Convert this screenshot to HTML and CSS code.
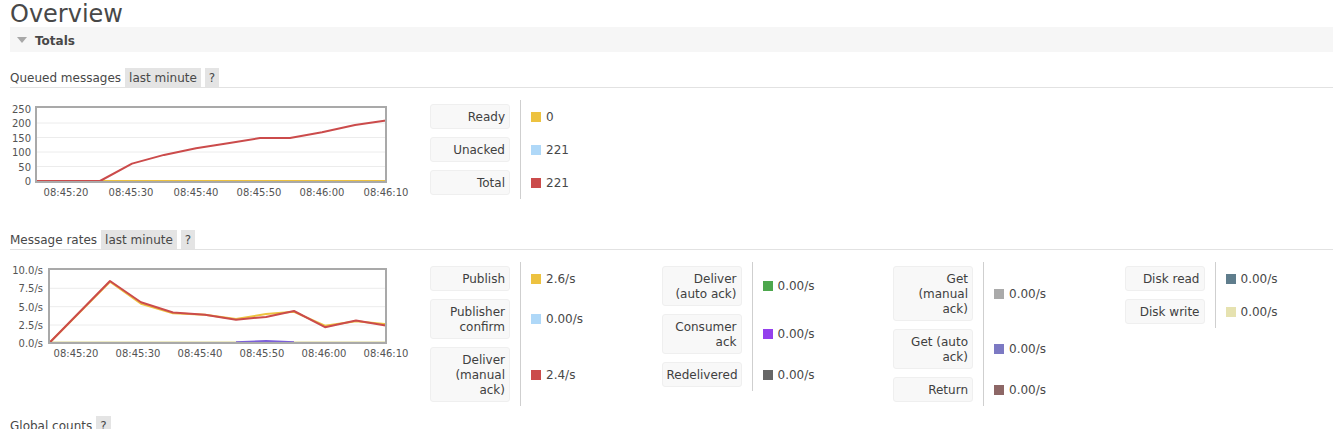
FILE: index.html
```html
<!DOCTYPE html>
<html>
<head>
<meta charset="utf-8">
<title>Overview</title>
<link rel="stylesheet" href="styles.css">
</head>
<body>
<h1 class="title">Overview</h1>
<div class="section-head"><span class="tri"></span><span class="section-name">Totals</span></div>

<h3 class="sub"><span class="sub-text">Queued messages</span><span class="pill pill-first">last minute</span><span class="pill">?</span></h3>
<div class="chart-row">
  <svg class="chart" width="410" height="120" viewBox="0 0 410 120">
    <g class="grid">
      <line x1="27" y1="66.5" x2="375" y2="66.5"/>
      <line x1="27" y1="52" x2="375" y2="52"/>
      <line x1="27" y1="37.5" x2="375" y2="37.5"/>
      <line x1="27" y1="23" x2="375" y2="23"/>
    </g>
    <g class="ylab">
      <text x="21" y="12.5">250</text>
      <text x="21" y="27">200</text>
      <text x="21" y="41.5">150</text>
      <text x="21" y="56">100</text>
      <text x="21" y="70.5">50</text>
      <text x="21" y="85">0</text>
    </g>
    <g class="xlab">
      <text x="56" y="96">08:45:20</text>
      <text x="121" y="96">08:45:30</text>
      <text x="186" y="96">08:45:40</text>
      <text x="249" y="96">08:45:50</text>
      <text x="312" y="96">08:46:00</text>
      <text x="376" y="96">08:46:10</text>
    </g>
    <polyline class="ln ln-yellow" points="27,81 376,81"/>
    <polyline class="ln ln-red" points="27,81 58,81 90,81 122,63.6 154,54.9 186,48.2 218,43.3 250,38 280,38 312,32.3 345,25 376,20.5"/>
    <rect class="frame" x="26" y="7" width="350" height="75"/>
  </svg>
  <div class="legend">
    <div class="facts">
      <div class="fact"><div class="fact-label"><div class="label-box">Ready</div></div><div class="fact-val"><span class="sw sw-yellow"></span>0</div></div>
      <div class="fact"><div class="fact-label"><div class="label-box">Unacked</div></div><div class="fact-val"><span class="sw sw-blue"></span>221</div></div>
      <div class="fact"><div class="fact-label"><div class="label-box">Total</div></div><div class="fact-val"><span class="sw sw-red"></span>221</div></div>
    </div>
  </div>
</div>

<h3 class="sub sub-next"><span class="sub-text">Message rates</span><span class="pill pill-first">last minute</span><span class="pill">?</span></h3>
<div class="chart-row">
  <svg class="chart" width="410" height="120" viewBox="0 0 410 120">
    <g class="grid">
      <line x1="40" y1="63" x2="375" y2="63"/>
      <line x1="40" y1="44.7" x2="375" y2="44.7"/>
      <line x1="40" y1="26.3" x2="375" y2="26.3"/>
    </g>
    <g class="ylab">
      <text x="33" y="12">10.0/s</text>
      <text x="33" y="30.3">7.5/s</text>
      <text x="33" y="48.7">5.0/s</text>
      <text x="33" y="67">2.5/s</text>
      <text x="33" y="85.3">0.0/s</text>
    </g>
    <g class="xlab">
      <text x="66" y="95">08:45:20</text>
      <text x="128" y="95">08:45:30</text>
      <text x="190" y="95">08:45:40</text>
      <text x="252" y="95">08:45:50</text>
      <text x="314" y="95">08:46:00</text>
      <text x="376" y="95">08:46:10</text>
    </g>
    <polyline class="ln ln-straw" points="40,80.3 376,80.3"/>
    <polyline class="ln ln-purple" points="226,80.3 256,79 284,80.3"/>
    <polyline class="ln ln-yellow" points="39,81.3 100,19.7 131,41.7 163,51.2 195,52.7 226,57.1 256,52 284,49.8 315,63.7 346,59.3 377,62.2"/>
    <polyline class="ln ln-red" points="39,81.3 100,19 131,40.3 163,50.5 195,52.7 226,57.8 256,54.9 284,49 315,65.2 346,58.6 377,63.7"/>
    <rect class="frame" x="39" y="7" width="337" height="74"/>
  </svg>
  <div class="legend">
    <div class="facts">
      <div class="fact"><div class="fact-label"><div class="label-box">Publish</div></div><div class="fact-val"><span class="sw sw-yellow"></span>2.6/s</div></div>
      <div class="fact"><div class="fact-label"><div class="label-box">Publisher confirm</div></div><div class="fact-val"><span class="sw sw-blue"></span>0.00/s</div></div>
      <div class="fact"><div class="fact-label"><div class="label-box">Deliver (manual ack)</div></div><div class="fact-val"><span class="sw sw-red"></span>2.4/s</div></div>
    </div>
    <div class="facts">
      <div class="fact"><div class="fact-label"><div class="label-box">Deliver (auto ack)</div></div><div class="fact-val"><span class="sw sw-green"></span>0.00/s</div></div>
      <div class="fact"><div class="fact-label"><div class="label-box">Consumer ack</div></div><div class="fact-val"><span class="sw sw-purple"></span>0.00/s</div></div>
      <div class="fact"><div class="fact-label"><div class="label-box">Redelivered</div></div><div class="fact-val"><span class="sw sw-dgrey"></span>0.00/s</div></div>
    </div>
    <div class="facts">
      <div class="fact"><div class="fact-label"><div class="label-box">Get (manual ack)</div></div><div class="fact-val"><span class="sw sw-lgrey"></span>0.00/s</div></div>
      <div class="fact"><div class="fact-label"><div class="label-box">Get (auto ack)</div></div><div class="fact-val"><span class="sw sw-violet"></span>0.00/s</div></div>
      <div class="fact"><div class="fact-label"><div class="label-box">Return</div></div><div class="fact-val"><span class="sw sw-brown"></span>0.00/s</div></div>
    </div>
    <div class="facts">
      <div class="fact"><div class="fact-label"><div class="label-box">Disk read</div></div><div class="fact-val"><span class="sw sw-slate"></span>0.00/s</div></div>
      <div class="fact"><div class="fact-label"><div class="label-box">Disk write</div></div><div class="fact-val"><span class="sw sw-straw"></span>0.00/s</div></div>
    </div>
  </div>
</div>

<h3 class="sub sub-next"><span class="sub-text">Global counts</span><span class="pill pill-first">?</span></h3>
</body>
</html>
```

FILE: styles.css
```css
html, body {
  margin: 0;
  padding: 0;
}
body {
  padding-left: 10px;
  font-family: "DejaVu Sans", Verdana, sans-serif;
  font-size: 12px;
  color: #484848;
  background: #fff;
  overflow: hidden;
}
.title {
  margin: 0;
  padding-top: 2px;
  font-size: 24px;
  font-weight: normal;
  line-height: 25px;
  color: #484848;
}
.section-head {
  display: flex;
  align-items: center;
  height: 25px;
  background: #f6f6f6;
  padding-left: 7px;
}
.tri {
  width: 0;
  height: 0;
  border-left: 5px solid transparent;
  border-right: 5px solid transparent;
  border-top: 6px solid #a8a8a8;
  margin-right: 8px;
  margin-top: 1px;
}
.section-name {
  font-weight: bold;
  color: #484848;
  margin-top: 2px;
}
.sub {
  display: flex;
  margin: 16px 0 0;
  height: 19px;
  line-height: 21px;
  font-size: 12px;
  font-weight: normal;
  border-bottom: 1px solid #e2e2e2;
}
.sub-next {
  margin-top: 10px;
}
.sub-text {
  margin-right: 4px;
}
.pill {
  background: #e4e4e4;
  padding: 0 4px;
  margin-left: 4px;
}
.pill-first {
  margin-left: 0;
}
.chart-row {
  display: flex;
  align-items: flex-start;
  margin-top: 12px;
}
.chart {
  display: block;
  flex: 0 0 410px;
}
.grid line {
  stroke: #ececec;
  stroke-width: 1;
}
.ylab text, .xlab text {
  font-family: "DejaVu Sans", Verdana, sans-serif;
  font-size: 10px;
  fill: #545454;
}
.ylab text {
  text-anchor: end;
}
.xlab text {
  text-anchor: middle;
}
.frame {
  fill: none;
  stroke: #a9a9a9;
  stroke-width: 2;
}
.ln {
  fill: none;
  stroke-width: 2;
  stroke-linejoin: round;
}
.ln-yellow { stroke: #edc240; }
.ln-red { stroke: #cb4b4b; }
.ln-straw { stroke: #e6e2b0; }
.ln-purple { stroke: #7c5fd8; }
.legend {
  display: flex;
  margin-left: 10px;
}
.facts {
  width: 231.5px;
  flex: 0 0 231.5px;
}
.fact {
  display: flex;
}
.fact-label {
  padding: 4px 10px 4px 0;
}
.label-box {
  width: 80px;
  box-sizing: border-box;
  padding: 5px 4px 3px 4px;
  line-height: 15px;
  text-align: right;
  background: #f8f8f8;
  border: 1px solid #efefef;
  border-radius: 3px;
  color: #404040;
}
.fact-val {
  display: flex;
  align-items: center;
  border-left: 1px solid #cfcfcf;
  padding-left: 10px;
}
.sw {
  display: inline-block;
  width: 10px;
  height: 10px;
  margin-right: 5px;
}
.sw-yellow { background: #edc240; }
.sw-blue { background: #afd8f8; }
.sw-red { background: #cb4b4b; }
.sw-green { background: #4da74d; }
.sw-purple { background: #9440ed; }
.sw-dgrey { background: #666666; }
.sw-lgrey { background: #aaaaaa; }
.sw-violet { background: #7c79c3; }
.sw-brown { background: #8d6766; }
.sw-slate { background: #5f7d8c; }
.sw-straw { background: #e6e2b0; }
```
